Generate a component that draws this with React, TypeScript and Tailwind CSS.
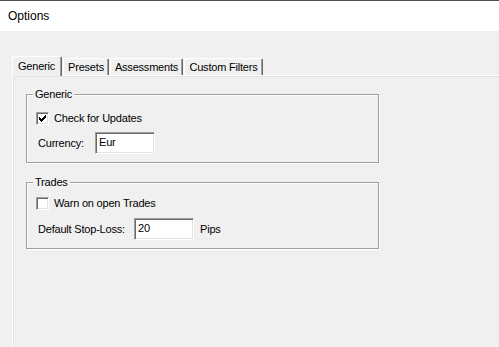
const tabs = [
  { label: "Generic", width: "w-[50px]", active: true },
  { label: "Presets", width: "w-[46px]", active: false },
  { label: "Assessments", width: "w-[73px]", active: false },
  { label: "Custom Filters", width: "w-[79px]", active: false },
];

const CheckBox = ({ checked }: { checked: boolean }) => (
  <div className="relative w-[13px] h-[13px] shrink-0 bg-white border border-t-[#a0a0a0] border-l-[#a0a0a0] border-r-white border-b-white shadow-[inset_1px_1px_0_#696969,inset_-1px_-1px_0_#e3e3e3]">
    {checked && (
      <svg
        className="absolute left-[-1px] top-[-1px]"
        width="13"
        height="13"
        viewBox="0 0 13 13"
        shapeRendering="crispEdges"
      >
        <path d="M3 5h1v1h1v1h1V6h1V5h1V4h1V3h1v3H9v1H8v1H7v1H6v1H5V9H4V8H3z" fill="#000" />
      </svg>
    )}
  </div>
);

const TextBox = ({ value }: { value: string }) => (
  <div className="w-[60px] h-[22px] shrink-0 flex items-center pl-[3px] pb-[2px] bg-white border border-t-[#a0a0a0] border-l-[#a0a0a0] border-r-white border-b-white shadow-[inset_1px_1px_0_#696969,inset_-1px_-1px_0_#e3e3e3]">
    {value}
  </div>
);

const GroupBox = ({
  title,
  className,
  children,
}: {
  title: string;
  className: string;
  children: React.ReactNode;
}) => (
  <fieldset
    className={`w-[353px] border border-[#a0a0a0] px-[9px] pb-[8px] shadow-[1px_1px_0_#fff,inset_1px_1px_0_#fff] ${className}`}
  >
    <legend className="ml-[-3px] px-[2px] h-[13px] leading-[13px] bg-[#f0f0f0]">{title}</legend>
    {children}
  </fieldset>
);

export default function App() {
  return (
    <div className="w-[499px] h-[347px] overflow-hidden flex flex-col bg-[#f0f0f0] text-black font-['Liberation_Sans',Arial,sans-serif]">
      <div className="h-[31px] shrink-0 flex items-center pl-[8px] bg-white border-t border-[#4d4d4d] text-[12px]">
        Options
      </div>

      <div className="flex-1 flex flex-col pt-[25px] pl-[12px] text-[11px] tracking-[-0.2px] leading-[13px]">
        <div className="relative z-10 flex items-end gap-[1px] h-[19px]">
          {tabs.map((t) => (
            <div
              key={t.label}
              className={`${t.width} flex items-center justify-center rounded-t-[2px] border-t border-l border-r border-t-white border-l-white border-r-[#696969] shadow-[inset_-1px_0_0_#a0a0a0] bg-[#f0f0f0] ${
                t.active ? "h-[20px] -mb-[1px] pr-[1px]" : "h-[17px]"
              }`}
            >
              {t.label}
            </div>
          ))}
        </div>

        <div className="flex-1 flex flex-col pl-[13px] pt-[12px] border-t border-l border-white shadow-[inset_1px_1px_0_#e3e3e3]">
          <GroupBox title="Generic" className="pt-[11px]">
            <div className="flex items-center gap-[5px] h-[13px]">
              <CheckBox checked />
              <span>Check for Updates</span>
            </div>
            <div className="flex items-center mt-[7px] pl-[2px]">
              <span className="w-[57px]">Currency:</span>
              <TextBox value="Eur" />
            </div>
          </GroupBox>

          <GroupBox title="Trades" className="mt-[13px] pt-[8px]">
            <div className="flex items-center gap-[5px] h-[13px]">
              <CheckBox checked={false} />
              <span>Warn on open Trades</span>
            </div>
            <div className="flex items-center mt-[8px] pl-[2px]">
              <span className="w-[96px]">Default Stop-Loss:</span>
              <TextBox value="20" />
              <span className="ml-[6px]">Pips</span>
            </div>
          </GroupBox>
        </div>
      </div>
    </div>
  );
}
